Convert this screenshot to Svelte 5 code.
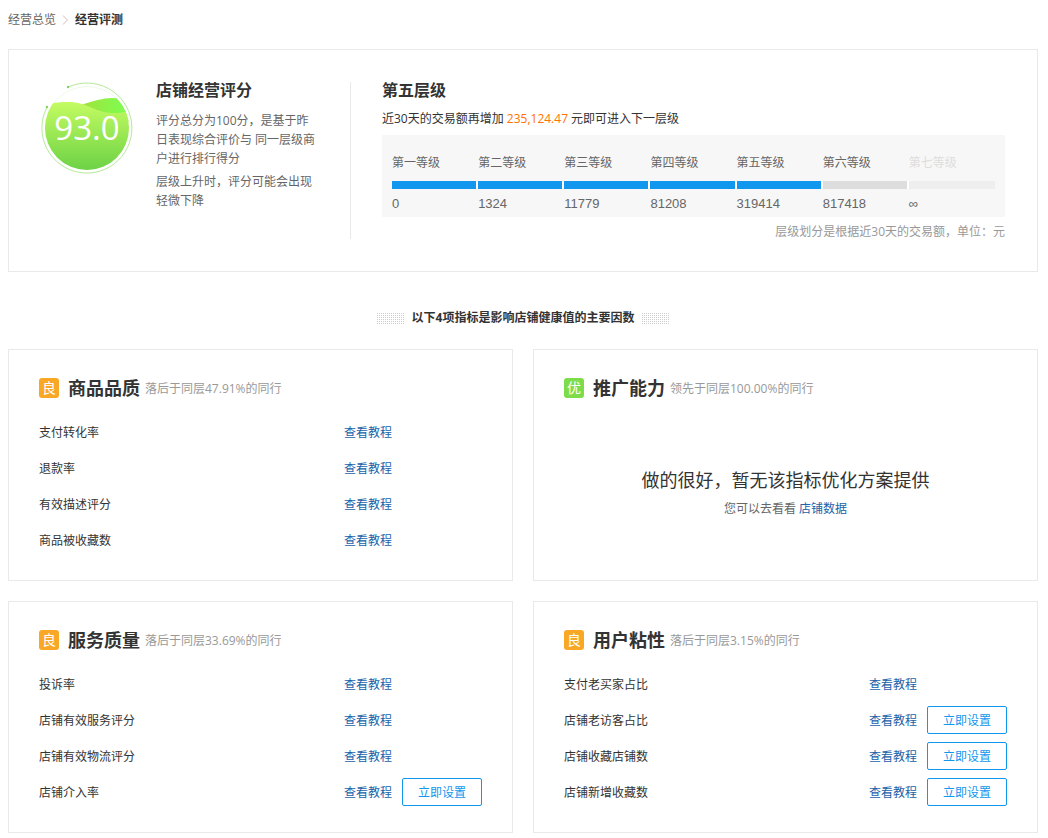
<script>
  const score = '93.0';
  const needed = '235,124.47';

  const levels = [
    { name: '第一等级', value: '0', state: 'done' },
    { name: '第二等级', value: '1324', state: 'done' },
    { name: '第三等级', value: '11779', state: 'done' },
    { name: '第四等级', value: '81208', state: 'done' },
    { name: '第五等级', value: '319414', state: 'done' },
    { name: '第六等级', value: '817418', state: 'next' },
    { name: '第七等级', value: '∞', state: 'locked' }
  ];

  const cards = [
    {
      grade: '良',
      title: '商品品质',
      rank: '落后于同层47.91%的同行',
      items: [
        { name: '支付转化率' },
        { name: '退款率' },
        { name: '有效描述评分' },
        { name: '商品被收藏数' }
      ]
    },
    {
      grade: '优',
      title: '推广能力',
      rank: '领先于同层100.00%的同行',
      items: []
    },
    {
      grade: '良',
      title: '服务质量',
      rank: '落后于同层33.69%的同行',
      items: [
        { name: '投诉率' },
        { name: '店铺有效服务评分' },
        { name: '店铺有效物流评分' },
        { name: '店铺介入率', setup: true }
      ]
    },
    {
      grade: '良',
      title: '用户粘性',
      rank: '落后于同层3.15%的同行',
      items: [
        { name: '支付老买家占比' },
        { name: '店铺老访客占比', setup: true },
        { name: '店铺收藏店铺数', setup: true },
        { name: '店铺新增收藏数', setup: true }
      ]
    }
  ];
</script>

<main>
  <nav class="crumbs">
    <a href="#overview">经营总览</a>
    <svg width="7" height="10" viewBox="0 0 7 10" aria-hidden="true">
      <path d="M1 0.5 L5.5 5 L1 9.5" fill="none" stroke="#d2b9bd" />
    </svg>
    <strong>经营评测</strong>
  </nav>

  <section class="summary">
    <svg class="gauge" width="92" height="92" viewBox="0 0 92 92" role="img" aria-label={score}>
      <defs>
        <linearGradient id="front" x1="0" y1="0" x2="0" y2="1">
          <stop offset="0" stop-color="#c4fb62" />
          <stop offset="1" stop-color="#67d043" />
        </linearGradient>
        <linearGradient id="back" x1="0" y1="0" x2="1" y2="0">
          <stop offset="0" stop-color="#a2e23c" />
          <stop offset="0.8" stop-color="#80fb4e" />
        </linearGradient>
        <clipPath id="bowl"><circle cx="46" cy="46" r="42" /></clipPath>
      </defs>
      <circle cx="46" cy="46" r="41.5" fill="none" stroke="#eefbe6" />
      <g clip-path="url(#bowl)">
        <path d="M40 23 C52 19 62 16 71 16 C78 16 84 17 92 20 V40 H40 Z" fill="url(#back)" />
        <path d="M0 25 C12 20 20 20 27 20 C48 20 52 31 74 31 C80 31 84 30 92 27 V92 H0 Z" fill="url(#front)" />
      </g>
      <!-- кольцо с разрывом слева сверху -->
      <path d="M27 5.2 A45 45 0 1 1 5.6 26" fill="none" stroke="#b4ea98" />
      <circle cx="27" cy="5" r="1.2" fill="#7fd45e" />
      <circle cx="6" cy="25" r="1.2" fill="#7fd45e" />
      <text x="46" y="58" text-anchor="middle">{score}</text>
    </svg>

    <div class="about">
      <h2>店铺经营评分</h2>
      <p>评分总分为100分，是基于昨日表现综合评价与 同一层级商户进行排行得分</p>
      <p>层级上升时，评分可能会出现轻微下降</p>
    </div>

    <div class="level">
      <h2>第五层级</h2>
      <p class="hint">近30天的交易额再增加 <em>{needed}</em> 元即可进入下一层级</p>
      <ol class="tiers">
        {#each levels as level}
          <li class={level.state}>
            <span class="tier-name">{level.name}</span>
            <span class="bar"></span>
            <span class="tier-value">{level.value}</span>
          </li>
        {/each}
      </ol>
      <p class="note">层级划分是根据近30天的交易额，单位：元</p>
    </div>
  </section>

  <h3 class="divider">以下4项指标是影响店铺健康值的主要因数</h3>

  <div class="cards">
    {#each cards as card}
      <section class="card">
        <header>
          <span class="grade" class:best={card.grade === '优'}>{card.grade}</span>
          <h2>{card.title}</h2>
          <small>{card.rank}</small>
        </header>
        {#if card.items.length}
          <ul>
            {#each card.items as item}
              <li>
                <span class="name">{item.name}</span>
                <a href="#course">查看教程</a>
                <span class="action">
                  {#if item.setup}
                    <button type="button">立即设置</button>
                  {/if}
                </span>
              </li>
            {/each}
          </ul>
        {:else}
          <div class="empty">
            <p class="praise">做的很好，暂无该指标优化方案提供</p>
            <p>您可以去看看 <a href="#data">店铺数据</a></p>
          </div>
        {/if}
      </section>
    {/each}
  </div>
</main>

<style>
  :global(body) {
    margin: 0;
    background: #fff;
  }

  main {
    padding: 10px 10px 5px 8px;
    font: 12px/20px 'Open Sans', 'Noto Sans CJK SC', sans-serif;
    color: #333;
  }

  h2, h3, p, ul, ol {
    margin: 0;
    padding: 0;
    list-style: none;
  }

  a {
    color: #2062a8;
    text-decoration: none;
  }

  a:hover {
    text-decoration: underline;
  }

  .crumbs {
    display: flex;
    align-items: center;
    gap: 6px;
    margin-bottom: 19px;
  }

  .crumbs a {
    color: #666;
  }

  .summary {
    display: flex;
    align-items: flex-start;
    padding: 32px 32px 29px;
    border: 1px solid #e9e9e9;
  }

  .summary h2 {
    font-size: 16px;
    line-height: 16px;
  }

  .gauge {
    flex: none;
  }

  .gauge text {
    font-size: 33px;
    font-weight: 500;
    fill: #fff;
  }

  .about {
    box-sizing: border-box;
    flex: none;
    width: 218px;
    height: 157px;
    padding: 0 33px 0 23px;
    border-right: 1px solid #e9e9e9;
    color: #666;
  }

  .about h2 {
    margin-bottom: 13px;
    color: #333;
  }

  .about p {
    margin-bottom: 4px;
    line-height: 19px;
  }

  .level {
    flex: 1;
    min-width: 0;
    padding-left: 31px;
  }

  .hint {
    margin: 11px 0 6px;
  }

  .hint em {
    font-style: normal;
    color: #ff7300;
  }

  .tiers {
    display: grid;
    grid-template-columns: repeat(7, 1fr);
    padding: 18px 10px 3px;
    background: #f7f7f7;
    color: #666;
  }

  .tiers span {
    display: block;
  }

  .bar {
    height: 8px;
    margin: 8px 0 5px;
    border-right: 2px solid #fff;
    background: #1197ee;
  }

  .tier-value {
    font: 13px/20px 'Liberation Sans', sans-serif;
  }

  .next .bar {
    background: #ddd;
  }

  .locked .bar {
    border: 0;
    background: #eee;
  }

  .locked .tier-name {
    color: #ddd;
  }

  .note {
    margin-top: 5px;
    text-align: right;
    color: #999;
  }

  .divider {
    display: flex;
    justify-content: center;
    align-items: center;
    gap: 8px;
    margin: 36px 0 21px;
    font-size: 12px;
  }

  .divider::before,
  .divider::after {
    content: '';
    width: 27px;
    height: 11px;
    background:
      repeating-linear-gradient(90deg, transparent 0 1px, #fff 1px 2px),
      repeating-linear-gradient(transparent 0 1px, #fff 1px 2px),
      #ccc;
  }

  .cards {
    display: grid;
    grid-template-columns: 1fr 1fr;
    gap: 20px;
  }

  .card {
    padding: 20px 30px 22px;
    border: 1px solid #e9e9e9;
  }

  .card header {
    display: flex;
    align-items: center;
    height: 36px;
    margin-bottom: 8px;
  }

  .card h2 {
    margin: 0 5px 0 9px;
    font-size: 18px;
  }

  .card small {
    font-size: 12px;
    color: #999;
  }

  .grade {
    width: 20px;
    border-radius: 3px;
    background: #f9a825;
    font-size: 14px;
    text-align: center;
    color: #fff;
  }

  .grade.best {
    background: #7ddc49;
  }

  .card li {
    display: flex;
    align-items: center;
    gap: 10px;
    height: 36px;
  }

  .card small,
  .card li a,
  .name {
    padding-top: 2px;
  }

  .name {
    flex: 1;
  }

  .action {
    width: 80px;
  }

  button {
    display: block;
    width: 80px;
    height: 28px;
    padding: 2px 0 0;
    border: 1px solid #1197ee;
    border-radius: 2px;
    background: #fff;
    font: inherit;
    color: #1197ee;
    cursor: pointer;
  }

  .empty {
    padding-top: 51px;
    text-align: center;
    color: #666;
  }

  .praise {
    margin-bottom: 4px;
    font-size: 18px;
    line-height: 30px;
    color: #333;
  }
</style>
